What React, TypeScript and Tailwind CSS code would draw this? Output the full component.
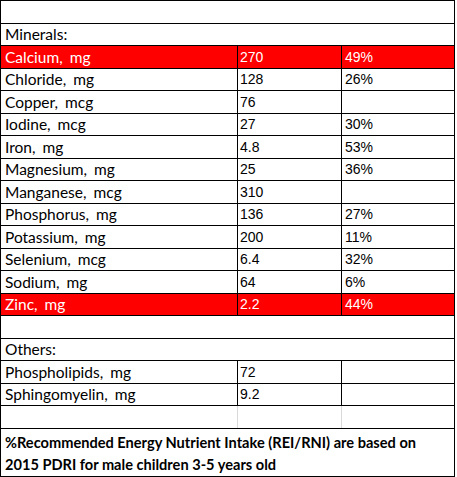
import React from "react";

type Row =
  | { kind: "blank"; grid?: boolean }
  | { kind: "label"; text: string }
  | { kind: "item"; name: string; value: string; pct?: string; red?: boolean };

const rows: Row[] = [
  { kind: "blank" },
  { kind: "label", text: "Minerals:" },
  { kind: "item", name: "Calcium, mg", value: "270", pct: "49%", red: true },
  { kind: "item", name: "Chloride, mg", value: "128", pct: "26%" },
  { kind: "item", name: "Copper, mcg", value: "76" },
  { kind: "item", name: "Iodine, mcg", value: "27", pct: "30%" },
  { kind: "item", name: "Iron, mg", value: "4.8", pct: "53%" },
  { kind: "item", name: "Magnesium, mg", value: "25", pct: "36%" },
  { kind: "item", name: "Manganese, mcg", value: "310" },
  { kind: "item", name: "Phosphorus, mg", value: "136", pct: "27%" },
  { kind: "item", name: "Potassium, mg", value: "200", pct: "11%" },
  { kind: "item", name: "Selenium, mcg", value: "6.4", pct: "32%" },
  { kind: "item", name: "Sodium, mg", value: "64", pct: "6%" },
  { kind: "item", name: "Zinc, mg", value: "2.2", pct: "44%", red: true },
  { kind: "blank" },
  { kind: "label", text: "Others:" },
  { kind: "item", name: "Phospholipids, mg", value: "72" },
  { kind: "item", name: "Sphingomyelin, mg", value: "9.2" },
  { kind: "blank", grid: true },
];

const nameFont = { fontFamily: "Lato, 'Noto Sans', sans-serif" };
const numFont = { fontFamily: "'Liberation Sans', Arial, sans-serif" };

export default function App() {
  return (
    <div className="w-[457px] h-[477px] bg-white">
      <div className="w-[455px] border-t border-l border-r border-black">
        {rows.map((row, i) => {
          const h = i % 2 === 0 ? "h-[23px]" : "h-[22px]";
          if (row.kind === "blank") {
            return (
              <div key={i} className={`${h} flex border-b border-black`}>
                {row.grid && (
                  <>
                    <div className="w-[237px] border-r border-[#d9d9d9]" />
                    <div className="w-[104px] border-r border-[#d9d9d9]" />
                  </>
                )}
              </div>
            );
          }
          if (row.kind === "label") {
            return (
              <div
                key={i}
                style={nameFont}
                className={`${h} flex items-end pb-[3px] pl-[4px] border-b border-black text-[15.5px] leading-none text-black`}
              >
                {row.text}
              </div>
            );
          }
          const color = row.red ? "bg-[#ff0000] text-white" : "bg-white text-black";
          return (
            <div key={i} className={`${h} flex border-b border-black ${color}`}>
              <div
                style={nameFont}
                className="w-[237px] border-r border-black flex items-end pb-[3px] pl-[4px] text-[15.5px] leading-none [word-spacing:3px]"
              >
                {row.name}
              </div>
              <div
                style={numFont}
                className="w-[104px] border-r border-black flex items-end pb-[4px] pl-[2px] text-[14px] leading-none"
              >
                {row.value}
              </div>
              <div
                style={numFont}
                className="flex-1 flex items-end pb-[4px] pl-[3px] text-[14px] leading-none"
              >
                {row.pct}
              </div>
            </div>
          );
        })}
        <div
          style={nameFont}
          className="h-[48px] border-b border-black pl-[4px] pt-[3px] text-[14.6px] font-bold leading-[22px] text-black"
        >
          %Recommended Energy Nutrient Intake (REI/RNI) are based on
          <br />
          2015 PDRI for male children 3-5 years old
        </div>
      </div>
    </div>
  );
}
